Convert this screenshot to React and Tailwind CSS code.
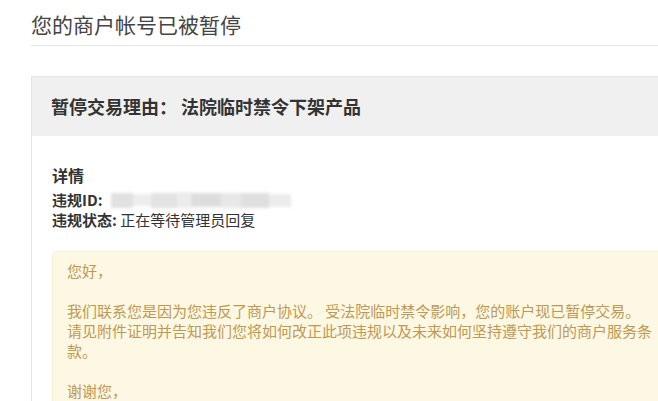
import React from 'react';

const font = { fontFamily: '"Microsoft YaHei", "Noto Sans CJK SC", "Noto Sans", sans-serif' };

const BlurredId = () => (
  <span className="inline-flex items-center h-[18px] ml-[8px] blur-[1.5px] opacity-90">
    <span className="w-[22px] h-[15px] bg-[#dedede]" />
    <span className="w-[18px] h-[12px] bg-[#ececec]" />
    <span className="w-[26px] h-[15px] bg-[#e0e0e0]" />
    <span className="w-[14px] h-[16px] bg-[#ebebeb]" />
    <span className="w-[30px] h-[14px] bg-[#dadada]" />
    <span className="w-[20px] h-[15px] bg-[#e6e6e6]" />
    <span className="w-[28px] h-[15px] bg-[#dcdcdc]" />
    <span className="w-[22px] h-[13px] bg-[#eaeaea]" />
  </span>
);

export default function App() {
  return (
    <div className="w-[658px] h-[401px] overflow-hidden bg-white text-[#333]" style={font}>
      <div className="ml-[31px]">
        <h1 className="pt-[10px] pb-[7px] leading-[28px] text-[21px] font-normal text-[#444] border-b border-[#e6e6e6]">
          您的商户帐号已被暂停
        </h1>

        <div className="mt-[30px] w-[664px] border border-[#e3e3e3]">
          <div className="h-[59px] flex items-center pl-[19px] bg-[#f0f0f0] text-[18px] font-bold text-[#333]">
            暂停交易理由： 法院临时禁令下架产品
          </div>

          <div className="px-[20px] pt-[28px]">
            <div className="text-[16px] leading-[22px] font-semibold mb-[4px]">详情</div>
            <div className="text-[15px] leading-[20px] flex items-center">
              <span className="font-semibold">违规ID:</span>
              <BlurredId />
            </div>
            <div className="text-[15px] leading-[20px]">
              <span className="font-semibold">违规状态:</span> 正在等待管理员回复
            </div>

            <div className="mt-[21px] pt-[9px] pl-[14px] pr-[14px] pb-[20px] bg-[#fcf8e3] border border-[#fbeed5] rounded-[4px] text-[15px] leading-[20px] text-[#c09853]">
              <p className="mb-[20px]">您好，</p>
              <p className="mb-[20px]">
                我们联系您是因为您违反了商户协议。 受法院临时禁令影响，您的账户现已暂停交易。
                <br />
                请见附件证明并告知我们您将如何改正此项违规以及未来如何坚持遵守我们的商户服务条款。
              </p>
              <p>谢谢您，</p>
            </div>
          </div>
        </div>
      </div>
    </div>
  );
}
